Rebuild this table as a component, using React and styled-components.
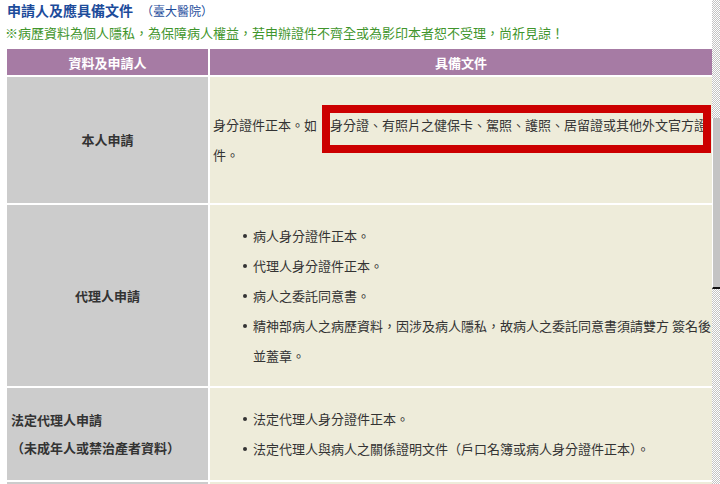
import React from "react";
import styled, { createGlobalStyle } from "styled-components";

const GlobalStyle = createGlobalStyle`
  html, body {
    margin: 0;
    padding: 0;
    background: #ffffff;
  }
  body {
    font-family: "Noto Sans CJK TC", "Noto Sans", sans-serif;
    font-size: 13px;
    color: #333333;
  }
`;

const Page = styled.div`
  display: flex;
  width: 720px;
  height: 484px;
  overflow: hidden;
`;

const Main = styled.div`
  flex: 1;
  min-width: 0;
`;

const Title = styled.h1`
  margin: 0;
  padding-left: 7px;
  font-size: 14px;
  line-height: 20px;
  font-weight: bold;
  color: #1d4c9b;
`;

const Hospital = styled.span`
  margin-left: 8px;
  font-size: 12px;
  font-weight: normal;
  color: #1d4c9b;
`;

const Notice = styled.p`
  margin: 2px 0 0;
  padding-left: 5px;
  font-size: 13px;
  line-height: 20px;
  color: #3f952c;
`;

const Table = styled.div`
  display: grid;
  grid-template-columns: 201px 502px;
  grid-template-rows: 26px 126px 181px 92px 60px;
  gap: 2px;
  margin: 6px 0 0 7px;
`;

const HeadCell = styled.div`
  display: flex;
  align-items: center;
  justify-content: center;
  background: #a67ba4;
  color: #ffffff;
  font-weight: bold;
  font-size: 13px;
`;

const NameCell = styled.div`
  display: flex;
  flex-direction: column;
  justify-content: center;
  align-items: ${(p) => (p.$left ? "flex-start" : "center")};
  padding-left: ${(p) => (p.$left ? "4px" : "0")};
  background: #cccccc;
  font-weight: bold;
  line-height: ${(p) => (p.$left ? "28px" : "30px")};
  color: #333333;
`;

const DocCell = styled.div`
  position: relative;
  display: flex;
  flex-direction: column;
  justify-content: center;
  padding-left: 3px;
  background: #eeecda;
  line-height: 30px;
  color: #333333;
  white-space: nowrap;
`;

const List = styled.ul`
  margin: 0;
  padding-left: 40px;
  list-style: none;
`;

const Item = styled.li`
  position: relative;

  &::before {
    content: "";
    position: absolute;
    left: -10px;
    top: 13px;
    width: 4px;
    height: 4px;
    border-radius: 50%;
    background: #333333;
  }
`;

const Highlight = styled.div`
  position: absolute;
  left: 112px;
  top: 28px;
  width: 389px;
  height: 48px;
  box-sizing: border-box;
  border: 8px solid #cc0000;
  pointer-events: none;
`;

const Scrollbar = styled.div`
  width: 8px;
  flex-shrink: 0;
  background-color: #ffffff;
  background-image: repeating-conic-gradient(#c4c4c4 0 25%, #ffffff 0 50%);
  background-size: 2px 2px;
`;

const Thumb = styled.div`
  margin-top: 118px;
  height: 169px;
  box-sizing: content-box;
  background: #c4c4c4;
  border-left: 1px solid #ffffff;
  border-bottom: 2px solid #111111;
`;

const applicants = [
  {
    name: ["本人申請"],
    docs: null,
  },
  {
    name: ["代理人申請"],
    docs: [
      ["病人身分證件正本。"],
      ["代理人身分證件正本。"],
      ["病人之委託同意書。"],
      ["精神部病人之病歷資料，因涉及病人隱私，故病人之委託同意書須請雙方 簽名後", "並蓋章。"],
    ],
  },
  {
    name: ["法定代理人申請", "（未成年人或禁治產者資料）"],
    left: true,
    docs: [
      ["法定代理人身分證件正本。"],
      ["法定代理人與病人之關係證明文件（戶口名簿或病人身分證件正本）。"],
    ],
  },
];

export default function App() {
  return (
    <Page>
      <GlobalStyle />
      <Main>
        <Title>
          申請人及應具備文件<Hospital>（臺大醫院）</Hospital>
        </Title>
        <Notice>
          ※病歷資料為個人隱私，為保障病人權益，若申辦證件不齊全或為影印本者恕不受理，尚祈見諒！
        </Notice>
        <Table>
          <HeadCell>資料及申請人</HeadCell>
          <HeadCell>具備文件</HeadCell>
          {applicants.map((a, i) => (
            <React.Fragment key={i}>
              <NameCell $left={a.left}>
                {a.name.map((n) => (
                  <div key={n}>{n}</div>
                ))}
              </NameCell>
              <DocCell>
                {a.docs ? (
                  <List>
                    {a.docs.map((d) => (
                      <Item key={d[0]}>
                        {d[0]}
                        {d[1] && <br />}
                        {d[1]}
                      </Item>
                    ))}
                  </List>
                ) : (
                  <>
                    <div>
                      身分證件正本。如：身分證、有照片之健保卡、駕照、護照、居留證或其他外文官方證
                    </div>
                    <div>件。</div>
                    <Highlight />
                  </>
                )}
              </DocCell>
            </React.Fragment>
          ))}
          <NameCell />
          <DocCell />
        </Table>
      </Main>
      <Scrollbar>
        <Thumb />
      </Scrollbar>
    </Page>
  );
}
